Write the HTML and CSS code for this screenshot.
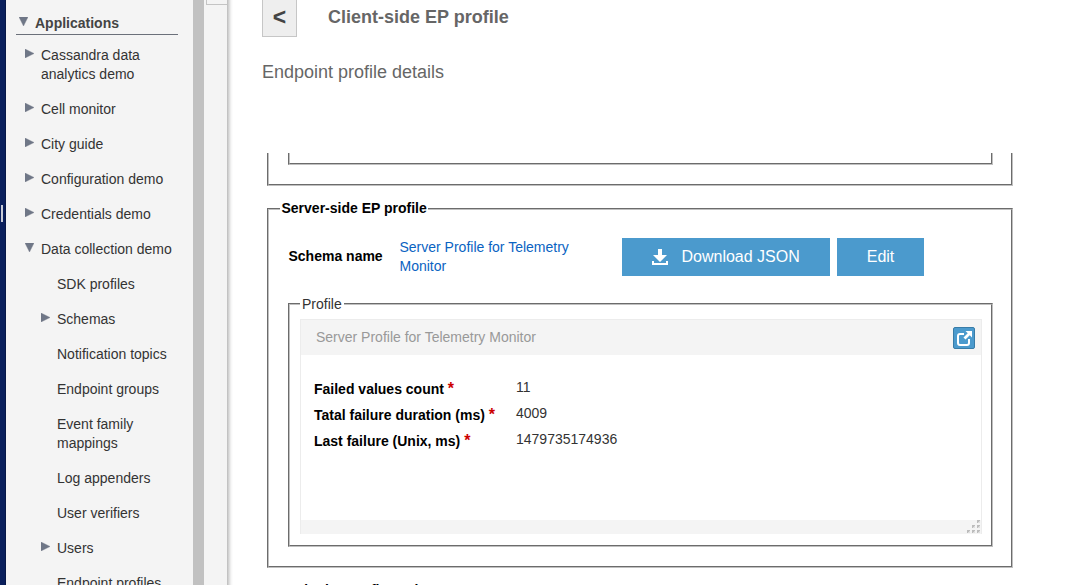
FILE: index.html
```html
<!DOCTYPE html>
<html lang="en">
<head>
<meta charset="utf-8">
<title>Endpoint profile</title>
<link rel="stylesheet" href="styles.css">
</head>
<body>
<svg class="defs" width="0" height="0">
  <symbol id="right" viewBox="0 0 9 9"><path d="M0 0L9 4.5L0 9Z"/></symbol>
  <symbol id="down" viewBox="0 0 9 9"><path d="M0 0H9L4.5 9Z"/></symbol>
</svg>
<div class="app">
  <div class="edge"><span class="handle"></span></div>
  <nav class="sidebar">
    <div class="root"><svg class="arrow"><use href="#down"/></svg><span>Applications</span></div>
    <ul class="tree">
      <li><svg class="arrow"><use href="#right"/></svg><span>Cassandra data<br>analytics demo</span></li>
      <li><svg class="arrow"><use href="#right"/></svg><span>Cell monitor</span></li>
      <li><svg class="arrow"><use href="#right"/></svg><span>City guide</span></li>
      <li><svg class="arrow"><use href="#right"/></svg><span>Configuration demo</span></li>
      <li><svg class="arrow"><use href="#right"/></svg><span>Credentials demo</span></li>
      <li><svg class="arrow"><use href="#down"/></svg><span>Data collection demo</span></li>
      <li class="sub leaf"><span>SDK profiles</span></li>
      <li class="sub"><svg class="arrow"><use href="#right"/></svg><span>Schemas</span></li>
      <li class="sub leaf"><span>Notification topics</span></li>
      <li class="sub leaf"><span>Endpoint groups</span></li>
      <li class="sub leaf"><span>Event family<br>mappings</span></li>
      <li class="sub leaf"><span>Log appenders</span></li>
      <li class="sub leaf"><span>User verifiers</span></li>
      <li class="sub"><svg class="arrow"><use href="#right"/></svg><span>Users</span></li>
      <li class="sub leaf"><span>Endpoint profiles</span></li>
    </ul>
  </nav>
  <div class="scrollbar"></div>
  <div class="gutter"><div class="stub"></div></div>
  <main class="main">
    <header class="header">
      <button class="back">&lt;</button>
      <h1 class="title">Client-side EP profile</h1>
    </header>
    <h2 class="subtitle">Endpoint profile details</h2>
    <div class="scroll">
      <div class="group group-cut"><div class="group inner-cut"></div></div>
      <fieldset class="group server">
        <legend class="strong">Server-side EP profile</legend>
        <div class="schema">
          <span class="label">Schema name</span>
          <a class="link">Server Profile for Telemetry Monitor</a>
          <button class="btn download">
            <svg width="16" height="16" viewBox="0 0 16 16" fill="#fff"><path d="M6 0h4v6h5L8 13L1 6h5z"/><path d="M0 12h2v2h12v-2h2v4H0z"/></svg>
            <span>Download JSON</span>
          </button>
          <button class="btn edit"><span>Edit</span></button>
        </div>
        <fieldset class="group profile">
          <legend>Profile</legend>
          <section class="panel">
            <div class="panel-head">
              <span>Server Profile for Telemetry Monitor</span>
              <span class="expand"><svg width="20" height="20" viewBox="0 0 20 20" fill="none"><path d="M10 6H6Q4 6 4 8V15Q4 17 6 17H13Q15 17 15 15V11" stroke="#fff" stroke-width="2"/><path d="M10.500 10.500L16 5" stroke="#fff" stroke-width="2.800"/><path d="M11.500 3H18V9.500Z" fill="#fff"/></svg></span>
            </div>
            <div class="fields">
              <span class="name">Failed values count <b class="req">*</b></span><span class="value">11</span>
              <span class="name">Tatal failure duration (ms) <b class="req">*</b></span><span class="value">4009</span>
              <span class="name">Last failure (Unix, ms) <b class="req">*</b></span><span class="value">1479735174936</span>
            </div>
            <div class="panel-foot">
              <svg width="14" height="13" viewBox="0 0 14 13"><g fill="#bcbcbc"><path d="M10 0h3v3h-3zM5 5h3v3h-3zM10 5h3v3h-3zM0 10h3v3h-3zM5 10h3v3h-3zM10 10h3v3h-3z"/></g><g fill="#dedede"><path d="M12 1h1v2h-2v-1h1zM7 6h1v2h-2v-1h1zM12 6h1v2h-2v-1h1zM2 11h1v2h-2v-1h1zM7 11h1v2h-2v-1h1zM12 11h1v2h-2v-1h1z"/></g></svg>
            </div>
          </section>
        </fieldset>
      </fieldset>
      <fieldset class="group config"><legend class="strong">Endpoint configuration</legend></fieldset>
    </div>
  </main>
</div>
</body>
</html>
```
FILE: styles.css
```css
* { box-sizing: border-box; }
body {
  margin: 0;
  overflow: hidden;
  background: #fff;
  font: 14px/19px "Liberation Sans", Arial, sans-serif;
  color: #333;
}
.defs { position: absolute; }
.app { display: flex; width: 1066px; height: 585px; overflow: hidden; }

.edge { width: 6px; background: #0a1f5c; border-right: 1px solid #071747; padding: 205px 0 0 1px; }
.handle { display: block; width: 2px; height: 17px; background: #c8cbd6; }

.sidebar { width: 187px; padding: 14px 15px 0 10px; background: #f4f4f4; white-space: nowrap; }
.root {
  display: flex;
  gap: 7px;
  height: 21px;
  padding-left: 3px;
  border-bottom: 1px solid #6b707a;
  font-weight: bold;
  color: #444;
}
.arrow { flex: none; width: 9px; height: 9px; margin-top: 3px; fill: #6f7787; stroke: #6f7787; stroke-width: 0.4px; }
.tree { margin: 0; padding: 11px 0 0; list-style: none; }
.tree li { display: flex; gap: 7px; padding: 0 0 16px 9px; }
.tree .sub { padding-left: 25px; }
.tree .leaf { padding-left: 41px; }

.scrollbar { width: 11px; background: #c1c1c1; }
.gutter { width: 23px; padding-left: 2px; background: #f4f4f4; }
.stub { height: 5px; border: solid #c4c4c4; border-width: 0 0 1px 1px; }

.main {
  width: 839px;
  padding-left: 35px;
  background: linear-gradient(90deg, #bbb, #d9d9d9 2px, #f4f4f4 4px, #fff 6px);
}
.header { display: flex; align-items: flex-start; gap: 31px; height: 37px; }
.back {
  width: 35px;
  height: 40px;
  margin-top: -3px;
  padding: 0;
  border: 1px solid #c6c6c6;
  background: #eee;
  font: bold 23px/38px "Liberation Sans", Arial, sans-serif;
  color: #444;
}
.title { margin: 7px 0 0; font-size: 18px; line-height: 21px; color: #666; }
.subtitle { margin: 25px 0 0; font-size: 18px; line-height: 21px; font-weight: normal; color: #666; }
.scroll { height: 432px; margin: 70px 0 0 5px; overflow: hidden; }

.group { margin: 0; padding: 0; border: 2px groove #c0c0c0; min-width: 0; }
.group-cut { width: 746px; height: 33px; padding: 0 18px 0 19px; border-top: 0; }
.inner-cut { height: 12px; border-top: 0; }
legend { padding: 0 2px; }
.strong { padding: 0 1.5px; font-weight: bold; color: #000; }
.server { width: 746px; height: 369px; margin-top: 13px; padding: 0 18px 0 11px; }
.schema { display: flex; align-items: flex-start; height: 75px; margin-left: 8.5px; padding-top: 20px; }
.label { width: 111px; padding-top: 9px; font-weight: bold; color: #000; }
.link { width: 222.5px; padding-right: 40px; color: #0a63c2; }
.btn {
  display: flex;
  align-items: center;
  height: 38px;
  padding: 0 0 0 30px;
  border: 0;
  background: #4b9acd;
  font: 16px/19px "Liberation Sans", Arial, sans-serif;
  color: #fff;
  white-space: nowrap;
}
.btn span { padding-bottom: 2px; }
.download { gap: 13.5px; width: 208px; margin-right: 7px; }
.edit { justify-content: center; width: 87px; padding: 0; }
.profile { height: 254px; margin-left: 8px; padding: 0 9px 0 10px; }
.profile legend { padding-top: 2px; }
.panel { display: flex; flex-direction: column; height: 215px; margin-top: 5px; border: 1px solid #ececec; border-bottom: 0; }
.panel-head {
  display: flex;
  justify-content: space-between;
  align-items: center;
  height: 35px;
  padding: 0 6px 0 15px;
  background: #f4f4f4;
  color: #999;
}
.expand { width: 22px; height: 22px; border: 1px solid #387ca8; border-radius: 2px; background: #4b9acd; }
.expand svg { display: block; }
.fields { flex: 1; display: grid; grid-template-columns: 202px 1fr; grid-auto-rows: 26px; padding: 23px 0 0 13px; }
.name { padding-top: 2px; font-weight: bold; color: #000; }
.req { font-size: 16px; line-height: 16px; color: #c00; }
.panel-foot { display: flex; justify-content: flex-end; height: 14px; background: #f4f4f4; }
.config { width: 746px; height: 200px; margin-top: 13px; padding-left: 11px; }
```
